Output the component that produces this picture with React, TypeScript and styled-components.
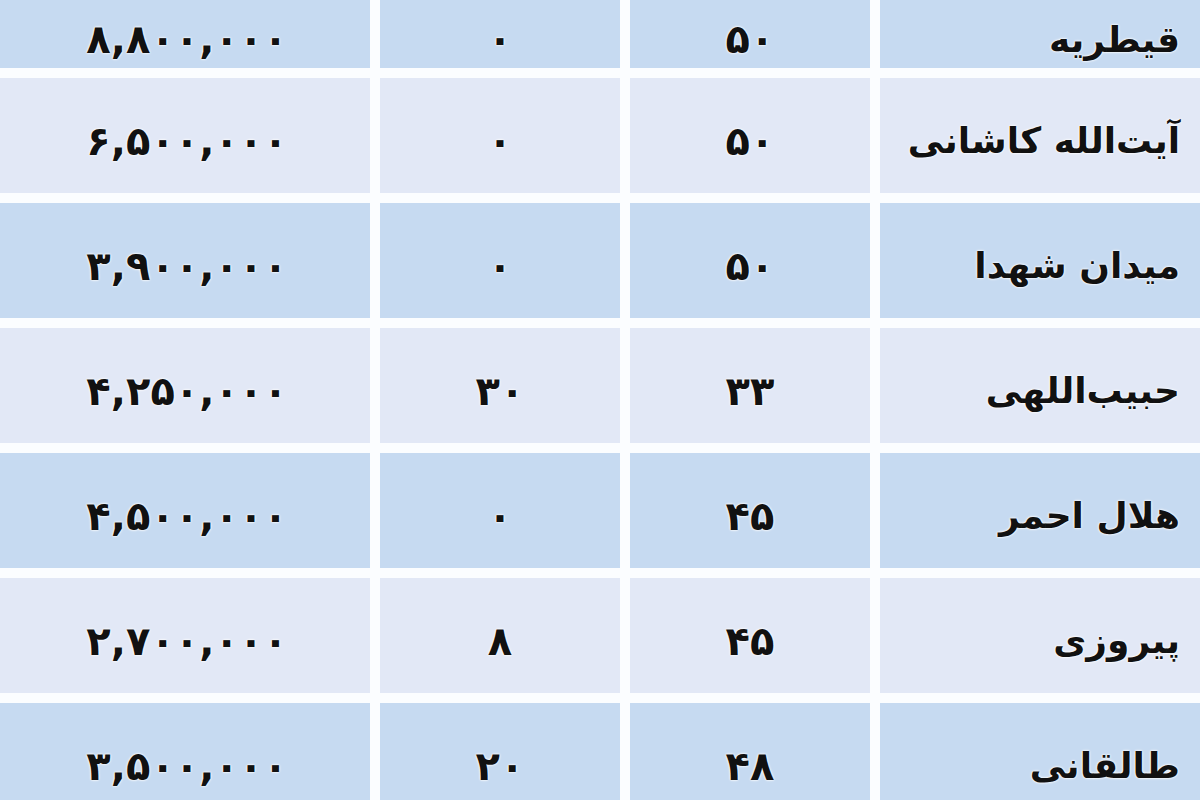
import React from 'react';
import {createGlobalStyle, styled} from "styled-components";

type RowType = {
    name: string
    percent: string
    discount: string
    price: string
}

const rows: RowType[] = [
    {name: 'قیطریه', percent: '۵۰', discount: '۰', price: '۸,۸۰۰,۰۰۰'},
    {name: 'آیت‌الله کاشانی', percent: '۵۰', discount: '۰', price: '۶,۵۰۰,۰۰۰'},
    {name: 'میدان شهدا', percent: '۵۰', discount: '۰', price: '۳,۹۰۰,۰۰۰'},
    {name: 'حبیب‌اللهی', percent: '۳۳', discount: '۳۰', price: '۴,۲۵۰,۰۰۰'},
    {name: 'هلال احمر', percent: '۴۵', discount: '۰', price: '۴,۵۰۰,۰۰۰'},
    {name: 'پیروزی', percent: '۴۵', discount: '۸', price: '۲,۷۰۰,۰۰۰'},
    {name: 'طالقانی', percent: '۴۸', discount: '۲۰', price: '۳,۵۰۰,۰۰۰'},
]

const GlobalStyle = createGlobalStyle`
  html, body {
    margin: 0;
    padding: 0;
    background: #fbfdff;
    overflow: hidden;
  }
`

export default function App() {
    return (
        <>
            <GlobalStyle/>
            <Page>
                <Table dir="rtl">
                    {rows.map((row, i) => (
                        <React.Fragment key={i}>
                            <Cell $dark={i % 2 === 0} $align="right"><Name>{row.name}</Name></Cell>
                            <Cell $dark={i % 2 === 0}><Num>{row.percent}</Num></Cell>
                            <Cell $dark={i % 2 === 0}><Num>{row.discount}</Num></Cell>
                            <Cell $dark={i % 2 === 0}><Price>{row.price}</Price></Cell>
                        </React.Fragment>
                    ))}
                </Table>
            </Page>
        </>
    )
}

const Page = styled.div`
  width: 1200px;
  height: 800px;
  overflow: hidden;
  background: #fbfdff;
`

const Table = styled.div`
  display: grid;
  grid-template-columns: 320px 240px 240px 370px;
  grid-template-rows: 68px;
  grid-auto-rows: 115px;
  gap: 10px;
`

const Cell = styled.div<{ $dark: boolean, $align?: 'right' | 'center' }>`
  display: flex;
  align-items: center;
  justify-content: ${props => props.$align === 'right' ? 'flex-start' : 'center'};
  padding: 10px 20px 0 20px;
  background-color: ${props => props.$dark ? '#c6daf1' : '#e2e8f6'};
  font-family: "DejaVu Sans", sans-serif;
  font-weight: bold;
  color: #111;
  text-shadow: 0 0 3px #fff, 0 0 2px #fff, 0 0 1px #fff;
  white-space: nowrap;
`

const Name = styled.span`
  font-size: 36px;
`

const Num = styled.span`
  direction: ltr;
  font-size: 40px;
  letter-spacing: 3px;
`

const Price = styled.span`
  direction: ltr;
  font-size: 40px;
  letter-spacing: 10px;
  margin-right: -4px;
`
